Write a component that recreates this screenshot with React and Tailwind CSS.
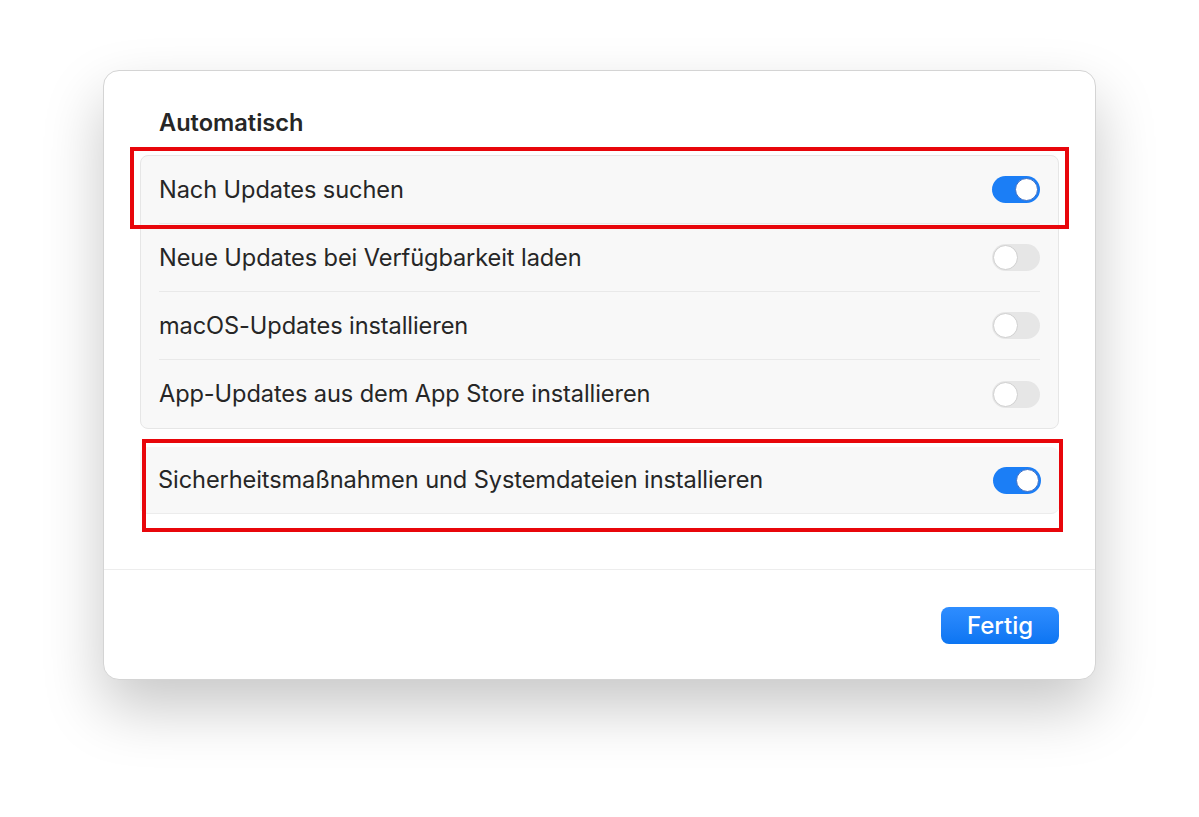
import React from 'react';

const rows = [
  { label: 'Nach Updates suchen', on: true },
  { label: 'Neue Updates bei Verfügbarkeit laden', on: false },
  { label: 'macOS-Updates installieren', on: false },
  { label: 'App-Updates aus dem App Store installieren', on: false },
];

function Toggle({ on }) {
  return on ? (
    <div className="w-[48px] h-[27px] rounded-full bg-[#1b7ef6] flex items-center justify-end p-[2px]">
      <div className="w-[23px] h-[23px] rounded-full bg-white border border-[#3f6fc4]" />
    </div>
  ) : (
    <div className="w-[48px] h-[27px] rounded-full bg-[#e6e6e6] flex items-center justify-start p-[1px]">
      <div className="w-[25px] h-[25px] rounded-full bg-white border border-[#cfcfcf]" />
    </div>
  );
}

function Row({ label, on, last, h = 'h-[68px]' }) {
  return (
    <div className={`${h} pl-[18px] pr-[18px] flex flex-col`}>
      <div className={`flex-1 flex items-center justify-between ${last ? '' : 'border-b border-[#e9e9e9]'}`}>
        <span className="text-[23.6px] text-[#262626] tracking-[-0.1px]">{label}</span>
        <Toggle on={on} />
      </div>
    </div>
  );
}

export default function App() {
  return (
    <div className="min-h-[817px] bg-white pt-[70px]" style={{ fontFamily: 'Inter, "Noto Sans", sans-serif' }}>
      <div className="relative mx-auto w-[993px] h-[610px] bg-white rounded-[16px] border border-[#d4d4d4] shadow-[0_28px_60px_rgba(0,0,0,0.22)] flex flex-col">
        {/* content */}
        <div className="px-[36px] pt-[37px]">
          <h2 className="pl-[19px] text-[23.6px] font-semibold text-[#262626] leading-[30px] mb-[17px]">Automatisch</h2>
          <div className="bg-[#f8f8f8] border border-[#e6e6e6] rounded-[8px] flex flex-col">
            {rows.map((r, i) => (
              <Row key={r.label} label={r.label} on={r.on} last={i === rows.length - 1} />
            ))}
          </div>
          <div className="mt-[18px] bg-[#f8f8f8] rounded-[8px] border-b border-[#ececec] flex flex-col">
            <Row label="Sicherheitsmaßnahmen und Systemdateien installieren" on={true} last h="h-[66px]" />
          </div>
        </div>

        {/* footer */}
        <div className="mt-[55px] border-t border-[#ededed] flex-1 flex justify-end items-start pt-[37px] pr-[36px]">
          <button className="w-[118px] h-[37px] rounded-[8px] bg-gradient-to-b from-[#2e8dff] to-[#0b75f2] text-white text-[24px] font-medium leading-none">
            Fertig
          </button>
        </div>

        {/* red annotation frames */}
        <div className="absolute left-[26px] top-[76px] w-[939px] h-[82px] border-[4px] border-[#e8060b] pointer-events-none" />
        <div className="absolute left-[38px] top-[368px] w-[921px] h-[93px] border-[4px] border-[#e8060b] pointer-events-none" />
      </div>
    </div>
  );
}
